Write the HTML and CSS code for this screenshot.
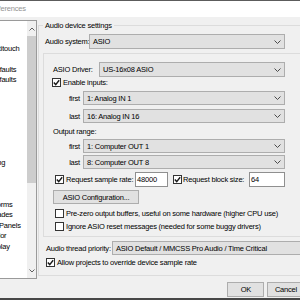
FILE: index.html
```html
<!DOCTYPE html>
<html lang="en">
  <head>
    <meta charset="UTF-8" />
    <meta name="viewport" content="width=device-width, initial-scale=1.0" />
    <title>Preferences</title>
    <link rel="stylesheet" href="styles.css">
  </head>
  <body>
    <div class="window">
      <div class="titlebar"><span class="title">Preferences</span></div>

      <div class="main">
        <div class="tree">
          <div class="tree-items">
            <ul>
              <li class="lv0">General</li>
              <li class="lv1">Paths</li>
              <li class="lv1">Keyboard/Multitouch</li>
              <li class="lv0">Project</li>
              <li class="lv1">Track/send defaults</li>
              <li class="lv1">Media item defaults</li>
              <li class="lv0">Audio</li>
              <li class="lv1">Device</li>
              <li class="lv1">MIDI Devices</li>
              <li class="lv1">Buffering</li>
              <li class="lv1">Mute/Solo</li>
              <li class="lv1">Playback</li>
              <li class="lv1">Recording</li>
              <li class="lv1">Loop Recording</li>
              <li class="lv1">Rendering</li>
              <li class="lv0">Appearance</li>
              <li class="lv1">Media</li>
              <li class="lv1">Peaks/Waveforms</li>
              <li class="lv1">Fades/Crossfades</li>
              <li class="lv1">Track Control Panels</li>
              <li class="lv1">Editing Behavior</li>
              <li class="lv1">Envelope Display</li>
              <li class="lv1">Automation</li>
              <li class="lv1">Mouse</li>
            </ul>
          </div>
          <div class="scrollbar">
            <div class="sb-btn">
              <svg width="6" height="4" viewBox="0 0 6 4"><polyline points="0.5,3.5 3,1 5.5,3.5" /></svg>
            </div>
            <div class="sb-track"><div class="sb-thumb"></div></div>
            <div class="sb-btn">
              <svg width="6" height="4" viewBox="0 0 6 4"><polyline points="0.5,0.5 3,3 5.5,0.5" /></svg>
            </div>
          </div>
        </div>

        <fieldset class="group device">
          <legend>Audio device settings</legend>

          <div class="row row-system">
            <span class="lbl-system">Audio system:</span>
            <div class="combo"><span>ASIO</span><svg class="chev" width="7" height="4" viewBox="0 0 7 4"><polyline points="0.5,0.5 3.5,3.5 6.5,0.5" /></svg></div>
          </div>

          <fieldset class="group driver">
            <div class="row row-driver">
              <span class="lbl-driver">ASIO Driver:</span>
              <div class="combo"><span>US-16x08 ASIO</span><svg class="chev" width="7" height="4" viewBox="0 0 7 4"><polyline points="0.5,0.5 3.5,3.5 6.5,0.5" /></svg></div>
            </div>

            <div class="row row-check row-enable">
              <span class="check"><svg width="7" height="7" viewBox="0 0 7 7"><polyline points="0.8,3.6 2.7,5.6 6.2,1.2" /></svg></span>
              <span>Enable inputs:</span>
            </div>

            <div class="row row-range row-first-in">
              <span class="lbl-range">first</span>
              <div class="combo"><span>1: Analog IN 1</span><svg class="chev" width="7" height="4" viewBox="0 0 7 4"><polyline points="0.5,0.5 3.5,3.5 6.5,0.5" /></svg></div>
            </div>
            <div class="row row-range row-last-in">
              <span class="lbl-range">last</span>
              <div class="combo"><span>16: Analog IN 16</span><svg class="chev" width="7" height="4" viewBox="0 0 7 4"><polyline points="0.5,0.5 3.5,3.5 6.5,0.5" /></svg></div>
            </div>

            <div class="row row-output">Output range:</div>

            <div class="row row-range row-first-out">
              <span class="lbl-range">first</span>
              <div class="combo"><span>1: Computer OUT 1</span><svg class="chev" width="7" height="4" viewBox="0 0 7 4"><polyline points="0.5,0.5 3.5,3.5 6.5,0.5" /></svg></div>
            </div>
            <div class="row row-range row-last-out">
              <span class="lbl-range">last</span>
              <div class="combo"><span>8: Computer OUT 8</span><svg class="chev" width="7" height="4" viewBox="0 0 7 4"><polyline points="0.5,0.5 3.5,3.5 6.5,0.5" /></svg></div>
            </div>

            <div class="row row-request">
              <span class="check"><svg width="7" height="7" viewBox="0 0 7 7"><polyline points="0.8,3.6 2.7,5.6 6.2,1.2" /></svg></span>
              <span class="lbl-rate">Request sample rate:</span>
              <span class="edit edit-rate">48000</span>
              <span class="check check-block"><svg width="7" height="7" viewBox="0 0 7 7"><polyline points="0.8,3.6 2.7,5.6 6.2,1.2" /></svg></span>
              <span class="lbl-block">Request block size:</span>
              <span class="edit edit-block">64</span>
            </div>

            <div class="row row-config">
              <button class="btn btn-config">ASIO Configuration...</button>
            </div>

            <div class="row row-check row-prezero">
              <span class="check"></span>
              <span>Pre-zero output buffers, useful on some hardware (higher CPU use)</span>
            </div>
            <div class="row row-check row-ignore">
              <span class="check"></span>
              <span>Ignore ASIO reset messages (needed for some buggy drivers)</span>
            </div>
          </fieldset>

          <div class="row row-priority">
            <span class="lbl-priority">Audio thread priority:</span>
            <div class="combo combo-priority"><span>ASIO Default / MMCSS Pro Audio / Time Critical</span><svg class="chev" width="7" height="4" viewBox="0 0 7 4"><polyline points="0.5,0.5 3.5,3.5 6.5,0.5" /></svg></div>
          </div>

          <div class="row row-check row-allow">
            <span class="check"><svg width="7" height="7" viewBox="0 0 7 7"><polyline points="0.8,3.6 2.7,5.6 6.2,1.2" /></svg></span>
            <span>Allow projects to override device sample rate</span>
          </div>
        </fieldset>
      </div>

      <div class="footer">
        <button class="btn btn-options">Options</button>
        <div class="actions">
          <button class="btn">OK</button>
          <button class="btn">Cancel</button>
          <button class="btn">Apply</button>
        </div>
      </div>
    </div>
  </body>
</html>
```

FILE: styles.css
```css
html,
body {
  margin: 0;
  overflow: hidden;
}

body {
  font-family: "Liberation Sans", Arial, sans-serif;
  font-size: 7.5px;
  letter-spacing: -0.2px;
  color: #000;
  background: #f0f0f0;
}

.window {
  width: 340px;
  height: 300px;
  box-sizing: border-box;
  display: flex;
  flex-direction: column;
  border-bottom: 2px solid #474747;
}

.titlebar {
  height: 17px;
  box-sizing: border-box;
  border-top: 1px solid #5c5c5c;
  background: #fff;
  line-height: 15px;
  color: #939393;
  white-space: nowrap;
}

.title {
  margin-left: -12.5px;
}

.main {
  display: flex;
  align-items: flex-start;
  height: 262px;
}

/* tree on the left, mostly scrolled out of the frame */
.tree {
  display: flex;
  width: 37px;
  height: 259px;
  margin-top: 3px;
  box-sizing: border-box;
  border: 1px solid #9a9a9a;
  border-left: none;
}

.tree-items {
  flex: 1;
  overflow: hidden;
  background: #fff;
}

.tree-items ul {
  list-style: none;
  margin: 0 0 0 -100px;
  padding: 2px 0 0;
  white-space: nowrap;
}

.tree-items li {
  height: 10.42px;
  line-height: 10.42px;
}

.lv0 {
  padding-left: 45px;
}

.lv1 {
  padding-left: 55px;
}

.scrollbar {
  width: 9px;
  display: flex;
  flex-direction: column;
  background: #f0f0f0;
}

.sb-btn {
  height: 15px;
  display: flex;
  align-items: center;
  justify-content: center;
}

.sb-btn polyline {
  fill: none;
  stroke: #606060;
  stroke-width: 1;
}

.sb-track {
  flex: 1;
}

.sb-thumb {
  height: 147px;
  background: #cdcdcd;
}

/* group boxes */
.group {
  margin: 0;
  border: 1px solid #dcdcdc;
  min-width: 0;
  box-sizing: border-box;
}

.device {
  width: 290px;
  margin: 3px 0 0 1px;
  padding: 0 0 8px 4px;
}

.device legend {
  padding: 0 2px;
  line-height: 11px;
}

.driver {
  width: 270px;
  margin: 4px 0 0;
  padding: 8px 0 5px 9px;
}

.row {
  display: flex;
  align-items: center;
  white-space: nowrap;
  box-sizing: border-box;
}

.row-system {
  width: 242px;
  height: 15px;
  margin-top: 3px;
  padding-left: 2px;
}

.lbl-system {
  width: 44px;
}

.row-driver {
  width: 232px;
  height: 15px;
}

.lbl-driver {
  width: 46px;
}

.row-check {
  height: 10px;
}

.row-enable {
  height: 11px;
  margin-left: -1px;
}

.row-range {
  width: 232px;
  height: 14px;
}

.lbl-range {
  width: 27px;
  margin-right: 3px;
  text-align: right;
}

.row-first-in {
  margin-top: 3px;
}

.row-last-in {
  margin-top: 4px;
}

.row-output {
  height: 10px;
  margin-top: 3px;
}

.row-first-out {
  margin-top: 3px;
}

.row-last-out {
  margin-top: 2px;
}

.row-request {
  width: 232px;
  height: 15px;
  margin-top: 3px;
  padding-left: 2px;
}

.lbl-rate {
  width: 69px;
}

.lbl-block {
  width: 66px;
}

.row-config {
  margin-top: 3px;
}

.row-prezero {
  margin-top: 4px;
  padding-left: 2px;
}

.row-ignore {
  margin-top: 3px;
  padding-left: 2px;
}

.row-priority {
  height: 14px;
  margin-top: 4px;
  padding-left: 3px;
}

.lbl-priority {
  width: 66px;
}

.row-allow {
  margin-top: 2px;
  padding-left: 3px;
}

/* controls */
.combo {
  flex: 1;
  height: 100%;
  display: flex;
  align-items: center;
  justify-content: space-between;
  padding: 0 3px;
  box-sizing: border-box;
  background: #e1e1e1;
  border: 1px solid #adadad;
}

.combo-priority {
  flex: none;
  width: 200px;
}

.chev polyline {
  fill: none;
  stroke: #4a4a4a;
  stroke-width: 1;
}

.check {
  width: 9px;
  height: 9px;
  margin-right: 2px;
  box-sizing: border-box;
  border: 1px solid #333;
  background: #fff;
  display: flex;
  align-items: center;
  justify-content: center;
  flex: none;
}

.check polyline {
  fill: none;
  stroke: #1a1a1a;
  stroke-width: 1.4;
}

.check-block {
  margin-left: 5px;
  margin-right: 1px;
}

.edit {
  height: 15px;
  display: flex;
  align-items: center;
  padding-left: 1px;
  box-sizing: border-box;
  background: #fff;
  border: 1px solid #8f8f8f;
}

.edit-rate {
  width: 33px;
}

.edit-block {
  flex: 1;
}

.btn {
  height: 15px;
  padding: 0;
  box-sizing: border-box;
  font: inherit;
  letter-spacing: inherit;
  color: #000;
  background: #e1e1e1;
  border: 1px solid #adadad;
}

.btn-config {
  width: 86px;
  height: 14px;
}

.footer {
  display: flex;
  height: 19px;
  padding-top: 3px;
  box-sizing: border-box;
}

.btn-options {
  width: 40px;
  margin-left: -31px;
  padding-right: 3px;
  text-align: right;
}

.actions {
  display: flex;
  gap: 3px;
  margin-left: 229px;
}

.actions .btn {
  width: 37px;
}
```
